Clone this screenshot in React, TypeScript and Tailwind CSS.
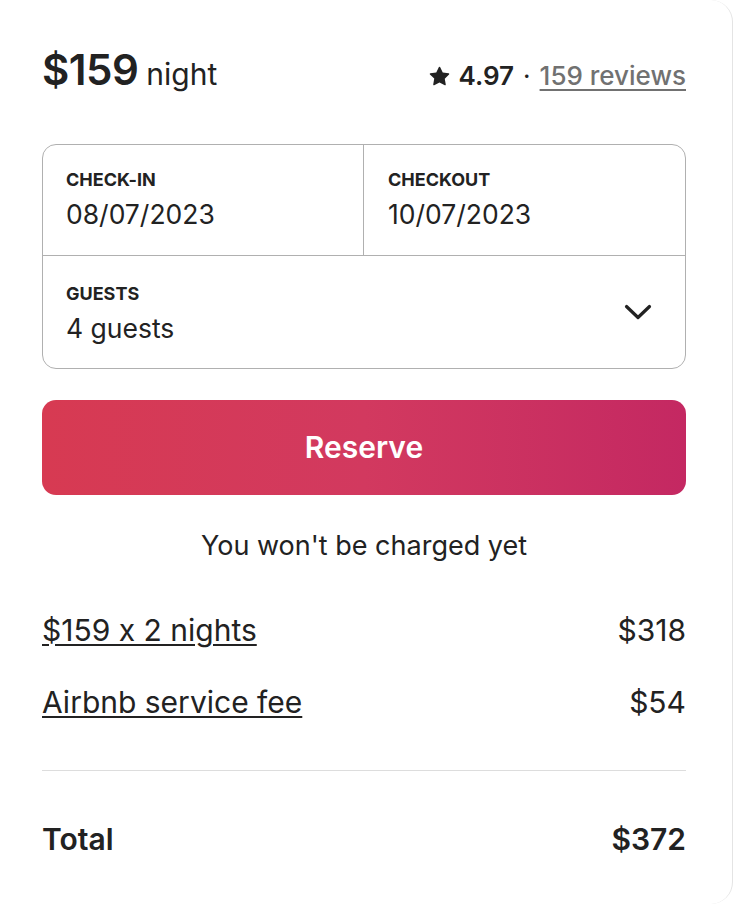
import React from 'react';

const font = { fontFamily: 'Inter, "Noto Sans", sans-serif', fontFeatureSettings: '"calt" 0' };

const Star: React.FC = () => (
  <svg viewBox="0 0 32 32" className="w-[21px] h-[21px] fill-[#222222]" aria-hidden="true">
    <path d="M15.1 1.58 11.05 9.8l-9.08 1.32a1 1 0 0 0-.55 1.7l6.57 6.41-1.55 9.04a1 1 0 0 0 1.45 1.05L16 25.06l8.11 4.27a1 1 0 0 0 1.45-1.05l-1.55-9.04 6.57-6.4a1 1 0 0 0-.55-1.71L20.95 9.8 16.9 1.58a1 1 0 0 0-1.8 0z" />
  </svg>
);

const Chevron: React.FC = () => (
  <svg viewBox="0 0 28 16" className="w-[28px] h-[16px]" fill="none" aria-hidden="true">
    <path d="M2.5 2.5 14 13.5 25.5 2.5" stroke="#222222" strokeWidth="3.2" strokeLinecap="round" strokeLinejoin="round" />
  </svg>
);

const PriceRow: React.FC<{ label: string; amount: string }> = ({ label, amount }) => (
  <div className="flex items-center justify-between h-[36px] text-[30px] text-[#222222]">
    <span className="underline underline-offset-[3px] decoration-[1.5px]">{label}</span>
    <span>{amount}</span>
  </div>
);

export default function App() {
  return (
    <div className="w-[734px] h-[904px] bg-white" style={font}>
      <div className="w-[733px] h-[904px] bg-white rounded-r-[22px] border-r border-[#e4e4e4] pl-[42px] pr-[46px] pt-[49px]">
        {/* header */}
        <div className="flex items-baseline justify-between text-[#222222]">
          <div className="flex items-baseline gap-[8px]">
            <span className="text-[42px] font-semibold leading-none tracking-[-0.5px]">$159</span>
            <span className="text-[30px] leading-none">night</span>
          </div>
          <div className="flex items-baseline gap-[9px] text-[26px] leading-none">
            <span className="self-center"><Star /></span>
            <span className="font-semibold">4.97</span>
            <span>·</span>
            <span className="text-[#717171] underline underline-offset-[4px] decoration-[1.5px] font-medium">159 reviews</span>
          </div>
        </div>

        {/* dates + guests */}
        <div className="mt-[53px] h-[225px] border border-[#b0b0b0] rounded-[14px] flex flex-col text-[#222222]">
          <div className="flex h-[111px] border-b border-[#b0b0b0]">
            <div className="flex-1 border-r border-[#b0b0b0] pl-[23px] pt-[24px]">
              <div className="text-[18px] font-bold leading-[22px]">CHECK-IN</div>
              <div className="mt-[7px] text-[26.5px] leading-[32px]">08/07/2023</div>
            </div>
            <div className="flex-1 pl-[24px] pt-[24px]">
              <div className="text-[18px] font-bold leading-[22px]">CHECKOUT</div>
              <div className="mt-[7px] text-[26.5px] leading-[32px]">10/07/2023</div>
            </div>
          </div>
          <div className="flex-1 flex items-center justify-between pl-[23px] pr-[33px]">
            <div className="pt-[2px]">
              <div className="text-[18px] font-bold leading-[22px]">GUESTS</div>
              <div className="mt-[7px] text-[26.5px] leading-[32px]">4 guests</div>
            </div>
            <Chevron />
          </div>
        </div>

        {/* reserve */}
        <button className="mt-[31px] w-full h-[95px] rounded-[14px] bg-gradient-to-r from-[#d73a52] via-[#d2395f] to-[#c42862] text-white text-[30px] font-semibold">
          Reserve
        </button>

        <p className="mt-[33px] text-center text-[27px] leading-[36px] text-[#222222]">You won't be charged yet</p>

        <div className="mt-[48px] flex flex-col gap-[36px]">
          <PriceRow label="$159 x 2 nights" amount="$318" />
          <PriceRow label="Airbnb service fee" amount="$54" />
        </div>

        <div className="mt-[50px] border-t border-[#dddddd]" />

        <div className="mt-[50px] flex items-center justify-between h-[36px] text-[30px] font-semibold text-[#222222]">
          <span>Total</span>
          <span>$372</span>
        </div>
      </div>
    </div>
  );
}
